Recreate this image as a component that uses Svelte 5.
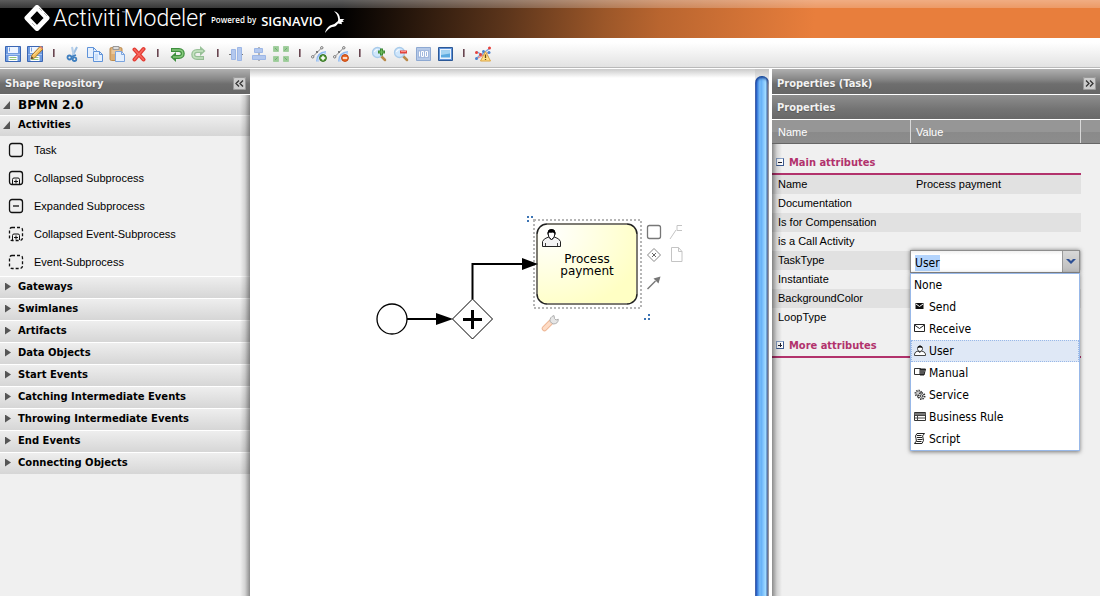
<script>
  import { onMount } from 'svelte';

  const toolbar = [
    ['Save', 'Save as'],
    ['Cut', 'Copy', 'Paste', 'Delete'],
    ['Undo', 'Redo'],
    ['Align vertical', 'Align horizontal', 'Same size'],
    ['Add docker', 'Remove docker'],
    ['Zoom in', 'Zoom out', 'Zoom standard', 'Zoom fit'],
    ['Check syntax']
  ];

  const disk =
    '<path d="M.5 .5h15v15h-15z" fill="#6f9be0" stroke="#3a66b4"/><path d="M3 1h10v6H3z" fill="#eef5ff"/><path d="M1 8.500h14" stroke="#a9c6f2"/><path d="M3.500 10h9v5h-9z" fill="#fff"/><path d="M4.500 11.500h7M4.500 13.500h7" stroke="#8fc27a"/><path d="M4.500 1.500v4" stroke="#7aa0dc"/>';
  const docker =
    '<path d="M6.500 15.500C6.500 10 9 7 15 6.500" fill="none" stroke="#8fbaf2" stroke-width="3"/><path d="M7 15.500C7 10.500 9.500 7.500 15 7" fill="none" stroke="#dbe9fb"/><path d="M2 10.500L10.500 2" fill="none" stroke="#888"/><g fill="#fff" stroke="#555" stroke-width=".8"><circle cx="1.700" cy="10.800" r="1.200"/><circle cx="10.800" cy="1.800" r="1.200"/></g><path d="M5 5h2v2H5z" fill="#777"/>';
  const lens =
    '<path d="M10 10L14 14" stroke="#b98a4a" stroke-width="2.500" stroke-linecap="round"/><circle cx="6.500" cy="6.500" r="5" fill="#cfe6fb" stroke="#a9cbea" stroke-width="1.300"/><path d="M3.500 6a3 3 0 0 1 3-2.500" stroke="#fff" fill="none"/>';

  const icons = {
    Save: disk,
    'Save as':
      disk +
      '<path d="M4 13l1-4 8-8.500 3 2.500-8.500 9z" fill="#f6c05a" stroke="#a8742a"/><path d="M6 9.500l7.500-7.500" stroke="#fde6ac"/><path d="M4 13l.6-2.400 1.800 1.500z" fill="#333"/><path d="M12.500 1l1.500-1 2 2-1 1.500z" fill="#e48a70"/>',
    Cut: '<path d="M12 1L7 11" stroke="#9dbfe2" stroke-width="2"/><path d="M7 1L9 11" stroke="#b5cfea" stroke-width="2"/><g fill="none" stroke="#3f7fbf" stroke-width="1.800"><circle cx="4.500" cy="11.500" r="2"/><circle cx="9.500" cy="13.200" r="1.800"/></g><path d="M6 11l5-2" stroke="#3f7fbf" stroke-width="1.500"/>',
    Copy: '<g fill="#e6f0fd" stroke="#5f93d9"><path d="M.5 1.500h6l3 3v7h-9z"/><path d="M6.500 5.500h6l3 3v7h-9z"/><path d="M12.500 5.500v3h3M6.500 1.500v3" fill="none"/></g><path d="M8 8h3v6H8z" fill="#c8defa"/>',
    Paste:
      '<rect x="1" y="1.500" width="12" height="13" rx="1.500" fill="#dcae74" stroke="#bb8a4e"/><path d="M2.500 3.500h9V8h-9z" fill="#e9c598"/><path d="M4 .5h6v3H4z" fill="#ddd" stroke="#999"/><path d="M6.500 5.500h6l3 3v7h-9z" fill="#e4effd" stroke="#7ba4de"/><path d="M12.500 5.500v3h3" fill="none" stroke="#7ba4de"/>',
    Delete:
      '<path d="M3.500 3.500l9 10M12.500 3L3.500 13.500" stroke="#e23b33" stroke-width="4" stroke-linecap="round"/><path d="M3.500 3.500l9 10M12.500 3L3.500 13.500" stroke="#f7685f" stroke-width="1.500" stroke-linecap="round"/>',
    Undo: '<path d="M2 4h8c5 0 5 7 0 7H6" fill="none" stroke="#3f8f3f" stroke-width="4"/><path d="M7 6L1.500 11 7 16z" fill="#3f8f3f"/><path d="M3 4h7c5 0 5 7 0 7H4" fill="none" stroke="#86c97c" stroke-width="1.600"/>',
    Redo: '<g opacity=".5"><path d="M13 12H6C1 12 1 5 6 5h4" fill="none" stroke="#3f8f3f" stroke-width="4"/><path d="M9 0l5.500 5L9 10z" fill="#3f8f3f"/><path d="M12 12H6C1 12 1 5 6 5h6" fill="none" stroke="#9ad691" stroke-width="1.600"/></g>',
    'Align vertical':
      '<path d="M0 8.500h14" stroke="#777" stroke-dasharray="3 1"/><g stroke="#9db7e6" fill="#b3c8ee"><path d="M2.500 3.500h4v10h-4zM8.500 1.500h4v13h-4z"/></g>',
    'Align horizontal':
      '<path d="M8 1v14" stroke="#777"/><g stroke="#9db7e6" fill="#b3c8ee"><path d="M3.500 2.500h8v4h-8zM1.500 9.500h13v4h-13z"/></g>',
    'Same size':
      '<g fill="#9bcb98" stroke="#a3cfa0"><path d="M.5 .5h5v5h-5zM10.500 .5h5v5h-5zM.5 10.500h5v5h-5zM10.500 10.500h5v5h-5z"/></g><path d="M2 2l2.500 2.500M14 2l-2.500 2.500M2 14l2.500-2.500M14 14l-2.500-2.500" stroke="#6fae70"/>',
    'Add docker':
      docker +
      '<circle cx="12" cy="12" r="3.400" fill="#58a03c" stroke="#2f6d1c"/><path d="M9.800 12h4.400M12 9.800v4.400" stroke="#fff" stroke-width="1.500"/>',
    'Remove docker':
      docker +
      '<circle cx="12" cy="12" r="3.400" fill="#ee6a26" stroke="#bf4410"/><path d="M9.800 12h4.400" stroke="#fff" stroke-width="1.500"/>',
    'Zoom in':
      lens + '<path d="M7 6h7M10.500 2.500v7" stroke="#3f8a34" stroke-width="3"/><path d="M8 6h5M10.500 3.500v5" stroke="#6fbd5e"/>',
    'Zoom out': lens + '<path d="M7 6h7" stroke="#e0443e" stroke-width="3"/><path d="M8 5.500h5" stroke="#ff8c84"/>',
    'Zoom standard':
      '<path d="M1.500 1.500h14v13h-14z" fill="#b5c9e8" stroke="#8ea9d2"/><path d="M3 4h11v8H3z" fill="#a3b9de"/><path d="M4.500 5.500v5M6.500 5.500h2v5h-2zM10.500 5.500h2v5h-2z" fill="none" stroke="#fff"/>',
    'Zoom fit':
      '<path d="M1.500 1.500h14v13h-14z" fill="#5f92d8" stroke="#2c5896"/><path d="M3 3h11v10H3z" fill="#eaf3fd"/><path d="M4 4.500h9v7H4z" fill="#5aaae0"/><path d="M4 4.500h9v3L4 9z" fill="#a4d4f2"/>',
    'Check syntax':
      '<path d="M1.500 5.500l5 3 8-6M1.500 12.500l4-4 8 2" fill="none" stroke="#7da7dc" stroke-width="1.300"/><path d="M1 13L14.500 6" stroke="#ee8a84" stroke-width="1.300"/><g fill="#4a83d0"><circle cx="1.500" cy="12.500" r="1.500"/><circle cx="14" cy="6.500" r="1.500"/><circle cx="8.500" cy="5.500" r="1.500"/></g><g fill="#e8413c"><circle cx="1.500" cy="6.500" r="1.500"/><circle cx="14.500" cy="2" r="1.500"/><circle cx="5.500" cy="8.500" r="1.500"/></g><path d="M10.500 5.500L15.500 15H5.500z" fill="#ffe08a" stroke="#dca545"/><path d="M10.500 8.500v3.500M10.500 13v1" stroke="#6b4a12" stroke-width="1.300"/>'
  };

  const box = '<rect x="1.500" y="1.500" width="13" height="13" rx="2.500" fill="none" stroke="#111" stroke-width="1.300"/>';
  const dashed =
    '<rect x="1.500" y="1.500" width="13" height="13" rx="2.500" fill="none" stroke="#111" stroke-width="1.300" stroke-dasharray="3 2"/>';
  const marker =
    '<path d="M4.500 14V9.500q0-1.500 1.500-1.500h4q1.500 0 1.500 1.500V14M6 11.500h4M8 9.500v4" fill="none" stroke="#111"/>';

  const activities = [
    { label: 'Task', icon: box },
    { label: 'Collapsed Subprocess', icon: box + marker },
    { label: 'Expanded Subprocess', icon: box + '<path d="M5 8h6" stroke="#111" stroke-width="1.300"/>' },
    { label: 'Collapsed Event-Subprocess', icon: dashed + marker },
    { label: 'Event-Subprocess', icon: dashed }
  ];

  const groups = [
    'Gateways',
    'Swimlanes',
    'Artifacts',
    'Data Objects',
    'Start Events',
    'Catching Intermediate Events',
    'Throwing Intermediate Events',
    'End Events',
    'Connecting Objects'
  ];

  const attributes = [
    ['Name', 'Process payment'],
    ['Documentation', ''],
    ['Is for Compensation', ''],
    ['is a Call Activity', ''],
    ['TaskType', null],
    ['Instantiate', ''],
    ['BackgroundColor', ''],
    ['LoopType', '']
  ];

  const taskTypes = [
    { label: 'None' },
    { label: 'Send', icon: '<path d="M1.500 2h8v6h-8z" fill="#111"/><path d="M2 3l3.500 2.500L9 3" fill="none" stroke="#fff"/>' },
    { label: 'Receive', icon: '<path d="M.5 1.500h10v7H.5zM.5 2l5 3.500 5-3.500" fill="#fff" stroke="#222"/>' },
    {
      label: 'User',
      icon: '<path d="M.5 10.500V9Q1 6.500 4 6L5.500 7.500 7.500 6Q11 6.500 11.500 9v1.500z" fill="#fff" stroke="#444"/><path d="M3.500 3.500a2.500 2.500 0 0 1 5 0c0 1.500-1 3-2.500 3S3.500 5 3.500 3.500z" fill="#fff" stroke="#333"/><path d="M3.500 3Q4 .5 6 .5T8.500 3L6 2.500z" fill="#111"/>'
    },
    {
      label: 'Manual',
      icon: '<path d="M.5 1.500h6v6h-6z" fill="#fff" stroke="#333"/><path d="M6 2h5.500L10 8H6z" fill="#222" stroke="#222"/><path d="M6 4h5M6 6h4" stroke="#bbb" stroke-width=".7"/>'
    },
    {
      label: 'Service',
      icon: '<circle cx="4.500" cy="4.500" r="3" fill="#ccc" stroke="#444" stroke-width="2" stroke-dasharray="1.300 1"/><circle cx="7.500" cy="7" r="3" fill="#eee" stroke="#333" stroke-width="2" stroke-dasharray="1.300 1"/><circle cx="7.500" cy="7" r="1.200" fill="#fff" stroke="#444"/>'
    },
    {
      label: 'Business Rule',
      icon: '<path d="M.5 1.500h11v8H.5z" fill="#fff" stroke="#333"/><path d="M.5 2h11v2H.5z" fill="#777"/><path d="M.5 4.500h11M.5 7h11M3.500 4v5.500" stroke="#444"/>'
    },
    {
      label: 'Script',
      icon: '<path d="M3 .5h7.500Q7.500 3 9 5t-1 5.500H.5Q3.500 8 2 5.500T3 .5z" fill="#fff" stroke="#222"/><path d="M3 2.500h4.500M3 4.500h5M3.500 6.500h5M2.500 8.500h5" stroke="#222"/>'
    }
  ];

  let selected = $state('User');
  let field;

  onMount(() => {
    field.focus();
    field.select();
  });
</script>

<div class="app">
  <header class="brand">
    <svg class="mark" width="26" height="26" viewBox="0 0 26 26" aria-hidden="true">
      <path d="M13 2.500L23 13 13 23.500 3 13z" fill="none" stroke="#fff" stroke-width="5" stroke-linejoin="round" />
      <path d="M15 3l3 3M20 8l3 3M8 18l3 3" stroke="#aaa" stroke-width=".8" />
    </svg>
    <span class="name">Activiti<sup>™</sup></span>
    <span class="name">Modeler</span>
    <span class="powered">Powered by</span>
    <span class="signavio">SIGNAVIO</span>
    <svg class="stag" width="22" height="24" viewBox="0 0 22 24" aria-hidden="true">
      <path
        d="M10 1q6 2 6 8l4.500 0-2 1.500 1.500 1-2.500.7.500 2-4-.7Q12 17 8 17q-3 1-7 6 1-5 5-7.500 5-1 8-4.500Q15 6 10 1z"
        fill="#fff"
      />
    </svg>
  </header>

  <nav class="toolbar" aria-label="Editor tools">
    {#each toolbar as group, i}
      {#if i > 0}<span class="sep"></span>{/if}
      {#each group as tool}
        <button class="tool" aria-label={tool}>
          <svg width="16" height="16" viewBox="0 0 16 16">{@html icons[tool]}</svg>
        </button>
      {/each}
    {/each}
  </nav>

  <main class="workspace">
    <aside class="repository">
      <div class="panel-head">
        <h2>Shape Repository</h2>
        <button class="collapse" aria-label="Collapse shape repository">
          <svg width="13" height="13" viewBox="0 0 13 13">
            <path d="M6 3.500L3 6.500l3 3M10 3.500l-3 3 3 3" fill="none" stroke="#333" stroke-width="1.300" />
          </svg>
        </button>
      </div>
      <button class="group root open">BPMN 2.0</button>
      <button class="group open">Activities</button>
      <ul>
        {#each activities as shape}
          <li>
            <svg width="16" height="16" viewBox="0 0 16 16" aria-hidden="true">{@html shape.icon}</svg>
            {shape.label}
          </li>
        {/each}
      </ul>
      {#each groups as group}
        <button class="group">{group}</button>
      {/each}
    </aside>

    <section class="canvas" aria-label="Process diagram">
      <svg width="100%" height="100%">
        <defs>
          <radialGradient id="taskFill" cx="0.1" cy="0.1" r="1">
            <stop offset="0" stop-color="#fff" />
            <stop offset="1" stop-color="#ffffc4" />
          </radialGradient>
        </defs>
        <g transform="translate(-250 -69)">
          <circle cx="392" cy="319" r="15" fill="#fff" stroke="#000" stroke-width="1.300" />
          <path d="M407 319h32" stroke="#000" stroke-width="2" />
          <path d="M436 313l17 6-17 6z" />
          <path d="M472.500 299l20 20-20 20-20-20z" fill="#fff" stroke="#000" />
          <path d="M463 319.500h19M472.500 310v19" stroke="#000" stroke-width="3" />
          <path d="M472.500 299v-35h52" fill="none" stroke="#000" stroke-width="2" />

          <rect x="537" y="224" width="100" height="80" rx="10" fill="url(#taskFill)" stroke="#222" stroke-width="1.500" />
          <path d="M547 224h80M547 304h80M537 234v60M637 234v60" stroke="#7d7b72" stroke-width="2" />
          <rect
            x="534"
            y="220"
            width="107"
            height="88"
            fill="none"
            stroke="#b6b6b6"
            stroke-width="2"
            stroke-dasharray="2 2"
          />
          <path d="M522 258l16 6-16 6z" />
          <path
            d="M542.500 246.500v-5q1-3 6-4.500l3 3 3-3q5 1.500 6 4.500v5z"
            fill="#f4f4f4"
            stroke="#222"
          />
          <path d="M545.500 246v-3M557.500 246v-3" stroke="#444" />
          <path d="M548 233q0-3.500 3.500-3.500t3.500 3.500q0 5-3.500 6.500-3.500-1.500-3.500-6.500z" fill="#fff" stroke="#111" />
          <path d="M547.500 235q-.5-6 4-6t4 6q-1-2-2.500-2.500-3 .5-4 0z" />
          <g class="label" text-anchor="middle">
            <text x="587" y="263">Process</text>
            <text x="587" y="275">payment</text>
          </g>

          <path
            d="M527 216h2v2h-2zM531 216h2v2h-2zM527 220h2v2h-2zM648 314h2v2h-2zM644 318h2v2h-2zM648 318h2v2h-2z"
            fill="#3c74b4"
          />

          <g fill="none" stroke="#888">
            <rect x="647.500" y="225.500" width="13" height="13" rx="2" stroke="#777" stroke-width="1.300" />
            <path d="M647.500 255l6.500-6.500 6.500 6.500-6.500 6.500z" />
            <path d="M652 253l4 4M656 253l-4 4" stroke="#666" />
            <path d="M682 225.500h-5v5h5M676 230l-6 9" stroke="#c4c4c4" />
            <path d="M671.500 247.500h7l3.500 4v10h-10.500zM678.500 247.500v4h3.500" stroke="#c4c4c4" />
            <path d="M647.500 289l8-8" stroke="#777" stroke-width="1.500" />
            <path d="M660.500 276.500l-2 7-5-5z" fill="#777" stroke="none" />
          </g>
          <path d="M544.500 328.500l6-6" stroke="#eeb796" stroke-width="5.500" stroke-linecap="round" />
          <path d="M544.500 328.500l6-6" stroke="#fddcc6" stroke-width="3.500" stroke-linecap="round" />
          <path
            d="M550 321.500q-.5-4.500 4-6l.5 3 1.500 1.500 2.300-.8q0 4.800-5.300 4.800z"
            fill="#e6e6e6"
            stroke="#b0b0b0"
          />
        </g>
      </svg>
    </section>

    <div class="track" aria-hidden="true"><div class="thumb"></div></div>

    <aside class="properties">
      <div class="panel-head">
        <h2>Properties (Task)</h2>
        <button class="collapse" aria-label="Collapse properties">
          <svg width="13" height="13" viewBox="0 0 13 13">
            <path d="M3 3.500l3 3-3 3M7 3.500l3 3-3 3" fill="none" stroke="#333" stroke-width="1.300" />
          </svg>
        </button>
      </div>
      <div class="panel-head second"><h3>Properties</h3></div>
      <table>
        <colgroup><col class="c-name" /><col class="c-value" /><col /></colgroup>
        <thead>
          <tr><th scope="col">Name</th><th scope="col">Value</th><td></td></tr>
        </thead>
        <tbody>
          <tr class="section">
            <th colspan="2" scope="colgroup">
              <button><span class="toggle"></span>Main attributes</button>
            </th>
          </tr>
          {#each attributes as [name, value]}
            <tr class="attr">
              <th scope="row">{name}</th>
              <td>
                {#if value === null}
                  <div class="combo">
                    <div class="field">
                      <input bind:this={field} type="text" aria-label="TaskType" value={selected} />
                      <button aria-label="Show task types">
                        <svg width="10" height="8" viewBox="0 0 10 8">
                          <path d="M0 1h3l2 2 2-2h3L5 6z" fill="#2c4f94" />
                        </svg>
                      </button>
                    </div>
                    <ul role="listbox" aria-label="Task types">
                      {#each taskTypes as type}
                        <li role="option" aria-selected={type.label === selected}>
                          {#if type.icon}
                            <svg width="12" height="12" viewBox="0 0 12 12" aria-hidden="true">{@html type.icon}</svg>
                          {/if}
                          {type.label}
                        </li>
                      {/each}
                    </ul>
                  </div>
                {:else}{value}{/if}
              </td>
            </tr>
          {/each}
          <tr class="section">
            <th colspan="2" scope="colgroup">
              <button><span class="toggle plus"></span>More attributes</button>
            </th>
          </tr>
        </tbody>
      </table>
    </aside>
  </main>
</div>

<style>
  :global(body) {
    margin: 0;
  }

  .app {
    display: flex;
    flex-direction: column;
    min-height: 100vh;
    background: #fff;
    color: #000;
    font: 11px/14px 'Liberation Sans', Arial, sans-serif;
  }

  button {
    margin: 0;
    padding: 0;
    border: 0;
    background: none;
    color: inherit;
    font: inherit;
    text-align: left;
  }

  svg {
    display: block;
    flex: none;
  }

  ul {
    margin: 0;
    padding: 0;
    list-style: none;
  }

  .brand {
    display: flex;
    align-items: flex-start;
    box-sizing: border-box;
    height: 38px;
    padding: 5px 24px;
    color: #fff;
    white-space: nowrap;
    background:
      linear-gradient(rgba(255, 255, 255, 0.36), rgba(255, 255, 255, 0.22)) top / 100% 8px no-repeat,
      linear-gradient(95deg, #000 31%, #5c351b 46%, #9c5729 55%, #b9652f 60%, #e87e3c 74%);
  }

  .name {
    position: relative;
    margin-left: 3px;
    font: 300 23px/27px Roboto, sans-serif;
  }

  .name sup {
    position: absolute;
    top: 5px;
    right: -5px;
    font-size: 6px;
    line-height: 6px;
  }

  .powered {
    margin: 9px 0 0 5px;
    font: 600 8px/12px 'Open Sans', sans-serif;
  }

  .signavio {
    margin: 8px 0 0 5px;
    font: 600 13px/16px 'Open Sans', sans-serif;
  }

  .stag {
    margin: 5px 0 0 1px;
  }

  .toolbar {
    display: flex;
    align-items: center;
    padding: 5px 2px 2px;
    border-bottom: 1px solid #b9b9b9;
    box-shadow: 0 1px #fff;
    background: linear-gradient(#fff 15%, #e2e2e2);
    z-index: 1;
  }

  .tool {
    padding: 3px;
  }

  .sep {
    width: 2px;
    height: 8px;
    margin: 0 7px 3px;
    background: linear-gradient(90deg, #4a2430, #bba8ae);
  }

  .workspace {
    display: flex;
    flex: 1;
    padding-top: 1px;
  }

  .repository {
    position: relative;
    width: 250px;
    background: #f0f0f0;
  }

  .repository::after {
    position: absolute;
    top: 26px;
    right: 0;
    bottom: 0;
    width: 10px;
    background: linear-gradient(90deg, rgba(0, 0, 0, 0), rgba(0, 0, 0, 0.12) 50%, rgba(0, 0, 0, 0.42));
    content: '';
    pointer-events: none;
  }

  .panel-head {
    display: flex;
    align-items: center;
    justify-content: space-between;
    box-sizing: border-box;
    height: 26px;
    padding: 4px 4px 0 5px;
    border-bottom: 1px solid #fff;
    background: linear-gradient(#b0b0b0, #888 40%, #6e6e6e 60%, #666);
    color: #f2f2f2;
  }

  h2,
  h3 {
    margin: 0;
    font: bold 11px/16px 'DejaVu Sans Condensed', 'DejaVu Sans', sans-serif;
    text-shadow: 0 1px 1px #555;
  }

  .collapse {
    border-radius: 2px;
    background: #cdcdcd;
    box-shadow: 0 0 0 1px #999 inset;
  }

  .group {
    display: flex;
    align-items: center;
    width: 100%;
    box-sizing: border-box;
    height: 22px;
    padding: 0 18px 2px 5px;
    border-top: 1px solid #fff;
    background: linear-gradient(#eee, #d6d6d6);
    font: bold 10px/16px 'DejaVu Sans', Verdana, sans-serif;
  }

  .group::before {
    flex: none;
    width: 6px;
    height: 8px;
    margin-right: 7px;
    background: #555;
    clip-path: polygon(0 0, 100% 50%, 0 100%);
    content: '';
  }

  .group.open {
    height: 21px;
    padding-left: 3px;
  }

  .group.open::before {
    width: 7px;
    margin-right: 8px;
    clip-path: polygon(100% 0, 100% 100%, 0 100%);
  }

  .group.open.root {
    height: 20px;
    padding-bottom: 0;
    border-top: 0;
    font-size: 12px;
  }

  .repository li {
    display: flex;
    align-items: center;
    gap: 10px;
    height: 28px;
    padding-left: 8px;
  }

  .canvas {
    flex: 1;
    min-width: 0;
    background: linear-gradient(#cacaca, #fff 9px);
  }

  .label {
    font: 12px 'DejaVu Sans', Verdana, sans-serif;
  }

  .track {
    display: flex;
    width: 14px;
    padding-top: 7px;
    margin-right: 3px;
    background: linear-gradient(#c4c4c4, #f2f2f2 12px);
  }

  .thumb {
    flex: 1;
    border-radius: 7px 7px 0 0;
    background: linear-gradient(
      90deg,
      #6d7ba0 0,
      #1f4fb8 1px,
      #4c92e6 3px,
      #7fc0fa 5px,
      #62aef5 6px,
      #8cccff 9px,
      #a5e0ff 11px,
      #3c62a8 12px,
      #8a8a92 13px,
      #b0aaa8 14px
    );
    box-shadow: 0 4px 3px -2px #123a8c inset;
  }

  .properties {
    position: relative;
    width: 328px;
    background: #f0f0f0;
  }

  .properties::after {
    position: absolute;
    top: 75px;
    bottom: 0;
    left: 0;
    width: 10px;
    background: linear-gradient(270deg, rgba(0, 0, 0, 0), rgba(0, 0, 0, 0.12) 50%, rgba(0, 0, 0, 0.42));
    content: '';
    pointer-events: none;
  }

  .panel-head.second {
    height: 25px;
    padding-top: 2px;
    background: linear-gradient(#8e8e8e, #737373 60%, #686868);
  }

  table {
    width: 100%;
    border-collapse: separate;
    border-spacing: 0;
    table-layout: fixed;
  }

  .c-name {
    width: 139px;
  }

  .c-value {
    width: 170px;
  }

  th,
  td {
    box-sizing: border-box;
    padding: 0 5px 0 6px;
    font-weight: normal;
    text-align: left;
  }

  thead th,
  thead td {
    height: 24px;
    border-bottom: 1px solid #666;
    background: linear-gradient(#969696 50%, #8a8a8a 50%, #8c8c8c);
    color: #fff;
  }

  thead th {
    box-shadow: inset -1px 0 #d8d8d8;
  }

  th + th,
  th + td {
    padding-left: 5px;
  }

  .section th {
    height: 31px;
    padding: 0 6px 0 4px;
    border-bottom: 2px solid #b2326c;
    vertical-align: bottom;
  }

  .section button {
    display: flex;
    align-items: center;
    gap: 5px;
    padding: 0 0 2px;
    color: #b2326c;
    font: bold 11px/16px 'DejaVu Sans Condensed', 'DejaVu Sans', sans-serif;
  }

  .toggle {
    width: 8px;
    height: 8px;
    margin-bottom: 2px;
    box-sizing: border-box;
    border: 1px solid #8ba3c8;
    border-right-color: #3d5a90;
    border-bottom-color: #3d5a90;
    background: linear-gradient(#223, #223) center / 4px 1px no-repeat, #fff;
  }

  .plus {
    background:
      linear-gradient(#223, #223) center / 4px 1px no-repeat,
      linear-gradient(#223, #223) center / 1px 4px no-repeat,
      #fff;
  }

  .attr th,
  .attr td {
    height: 19px;
    padding-bottom: 2px;
  }

  .attr:nth-child(even) th,
  .attr:nth-child(even) td {
    background: #e1e1e1;
  }

  .combo {
    position: relative;
    height: 17px;
    margin-left: -6px;
  }

  .field {
    position: absolute;
    top: -1px;
    left: 0;
    display: flex;
    box-sizing: border-box;
    width: 170px;
    height: 23px;
    border: 1px solid #8d8d8d;
    background: #fff;
    box-shadow: 0 0 4px rgba(0, 0, 0, 0.5);
  }

  input {
    flex: 1;
    min-width: 0;
    padding: 2px 4px 0;
    border: 0;
    outline: 0;
    background: linear-gradient(#f0f0f0, #fff 4px);
    font: 12px/16px 'DejaVu Sans Condensed', Tahoma, sans-serif;
  }

  input::selection {
    background: #b3d4fd;
    color: #000;
  }

  .field button {
    display: flex;
    align-items: center;
    justify-content: center;
    width: 17px;
    border-left: 1px solid #999;
    background: linear-gradient(#d8d8d8, #bcbcbc);
  }

  .combo ul {
    position: absolute;
    z-index: 2;
    top: 22px;
    left: 0;
    box-sizing: border-box;
    width: 170px;
    border: 1px solid #98b8e8;
    background: #fff;
    box-shadow: 0 1px 4px rgba(0, 0, 0, 0.5);
  }

  .combo li {
    display: flex;
    align-items: center;
    gap: 3px;
    box-sizing: border-box;
    height: 22px;
    padding: 0 2px;
    border: 1px dotted transparent;
    font: 12px/16px 'DejaVu Sans Condensed', Tahoma, sans-serif;
  }

  .combo li[aria-selected='true'] {
    border-color: #98b8e8;
    background: #dfe8f6;
  }
</style>
